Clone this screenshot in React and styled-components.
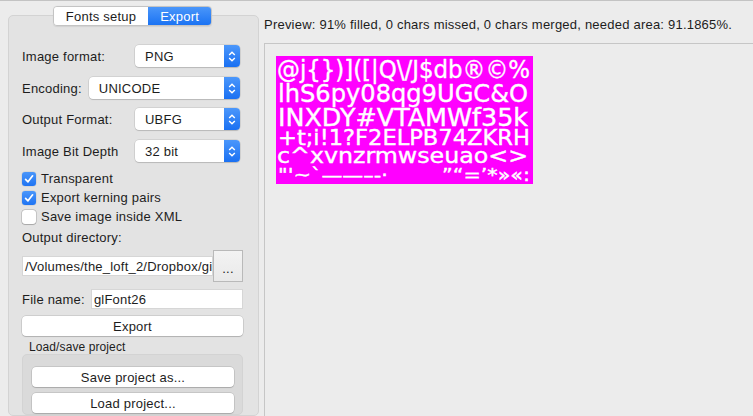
import React from "react";
import styled, { createGlobalStyle } from "styled-components";

const GlobalStyle = createGlobalStyle`
  html, body { margin: 0; padding: 0; background: #ececec; }
  body {
    font-family: "Liberation Sans", Arial, sans-serif;
    font-size: 13px;
    letter-spacing: 0.22px;
    color: #1d1d1d;
  }
  * { box-sizing: border-box; }
`;

const Window = styled.div`
  width: 753px;
  height: 416px;
  border-top: 1px solid #c3c3c3;
  background: #ececec;
  display: flex;
  overflow: hidden;
`;

const Sidebar = styled.div`
  width: 259px;
  flex: none;
  padding: 5px 0 0 8px;
  display: flex;
  flex-direction: column;
`;

const TabBar = styled.div`
  align-self: center;
  display: flex;
  height: 20px;
  border: 1px solid #c4c4c4;
  border-radius: 4px;
  overflow: hidden;
  position: relative;
  z-index: 1;
  margin-left: -2px;
  box-shadow: 0 0.5px 1px rgba(0, 0, 0, 0.08);
`;

const Tab = styled.div`
  height: 100%;
  padding: 0 ${(p) => p.$pad}px;
  display: flex;
  align-items: center;
  font-size: 13px;
  background: ${(p) => (p.$active ? "linear-gradient(#4a96fa, #1b73f3)" : "#fff")};
  color: ${(p) => (p.$active ? "#fff" : "#1d1d1d")};
`;

const Pane = styled.div`
  flex: 1;
  margin-top: -11px;
  background: #e3e3e3;
  border: 1px solid #d3d3d3;
  border-radius: 5px;
  padding: 29px 15px 0 13px;
  display: flex;
  flex-direction: column;
`;

const Row = styled.div`
  display: flex;
  align-items: center;
  height: ${(p) => p.$h}px;
  margin-top: ${(p) => p.$mt || 0}px;
  flex: none;
`;

const Label = styled.span`
  flex: none;
  width: ${(p) => (p.$w ? `${p.$w}px` : "auto")};
  margin-right: ${(p) => p.$gap || 0}px;
  white-space: nowrap;
`;

const SelectBox = styled.div`
  flex: 1;
  height: 22px;
  margin-right: 3px;
  display: flex;
  background: #fff;
  border-radius: 4px;
  box-shadow: 0 0 0 0.5px rgba(0, 0, 0, 0.15), 0 1px 1px rgba(0, 0, 0, 0.12);
  overflow: hidden;
`;

const SelectText = styled.span`
  flex: 1;
  padding-left: 10px;
  display: flex;
  align-items: center;
`;

const SelectArrow = styled.span`
  width: 16px;
  flex: none;
  background: linear-gradient(#4b97fb, #1a70f2);
  display: flex;
  align-items: center;
  justify-content: center;
`;

const CheckRow = styled.div`
  display: flex;
  align-items: center;
  height: 19px;
  flex: none;
`;

const Box = styled.span`
  width: 14px;
  height: 14px;
  margin-right: 5px;
  border-radius: 3px;
  flex: none;
  display: flex;
  align-items: center;
  justify-content: center;
  background: ${(p) => (p.$checked ? "linear-gradient(#4a96fa, #1f74f3)" : "#fff")};
  box-shadow: ${(p) =>
    p.$checked
      ? "0 0 0 0.5px rgba(0,0,0,0.1)"
      : "0 0 0 0.5px rgba(0,0,0,0.25), 0 0.5px 1px rgba(0,0,0,0.15)"};
`;

const LineEdit = styled.div`
  flex: 1;
  min-width: 0;
  height: 20px;
  background: #fff;
  border: 1px solid #d6d6d6;
  padding-left: 2px;
  display: flex;
  align-items: center;
  white-space: nowrap;
  overflow: hidden;
`;

const BrowseButton = styled.div`
  width: 30px;
  height: 32px;
  flex: none;
  border: 1px solid #b9b9b9;
  background: linear-gradient(#f3f3f3, #e9e9e9);
  display: flex;
  align-items: center;
  justify-content: center;
  padding-top: 4px;
  font-size: 13px;
`;

const PushButton = styled.div`
  height: 20px;
  flex: none;
  margin-top: ${(p) => p.$mt || 0}px;
  background: #fff;
  border-radius: 4px;
  box-shadow: 0 0 0 0.5px rgba(0, 0, 0, 0.18), 0 1px 1px rgba(0, 0, 0, 0.14);
  display: flex;
  align-items: center;
  justify-content: center;
  font-size: 13px;
`;

const GroupTitle = styled.div`
  height: 14px;
  margin-top: 4px;
  padding-left: 7px;
  font-size: 12px;
  letter-spacing: 0.1px;
  line-height: 14px;
  flex: none;
`;

const Group = styled.div`
  flex: 1;
  background: #dadada;
  border: 1px solid #d3d3d3;
  border-radius: 5px;
  padding: 12px 8px 0 9px;
  display: flex;
  flex-direction: column;
`;

const Main = styled.div`
  flex: 1;
  margin-left: 5px;
  display: flex;
  flex-direction: column;
`;

const Status = styled.div`
  height: 42px;
  padding-top: 16px;
  line-height: 16px;
  font-size: 13px;
  white-space: nowrap;
  flex: none;
`;

const Frame = styled.div`
  flex: 1;
  border-top: 1px solid #c6c6c6;
  border-left: 1px solid #c6c6c6;
  padding: 12px 0 0 11px;
`;

const Arrows = () => (
  <svg width="8" height="13" viewBox="0 0 8 13">
    <path d="M1.2 5 L4 2.2 L6.8 5 M1.2 8 L4 10.8 L6.8 8" fill="none" stroke="#fff" strokeWidth="1.4" />
  </svg>
);

const Check = () => (
  <svg width="10" height="10" viewBox="0 0 10 10">
    <path d="M1.6 5.4 L4 7.8 L8.6 1.8" fill="none" stroke="#fff" strokeWidth="1.7" strokeLinecap="round" strokeLinejoin="round" />
  </svg>
);

const Select = ({ value }) => (
  <SelectBox>
    <SelectText>{value}</SelectText>
    <SelectArrow>
      <Arrows />
    </SelectArrow>
  </SelectBox>
);

const CheckItem = ({ checked, children }) => (
  <CheckRow>
    <Box $checked={checked}>{checked && <Check />}</Box>
    {children}
  </CheckRow>
);

const glyphRows = [
  { t: "@j{})]([|Q\\/J$db®©%", y: 22, x: 1, w: 253, s: 25 },
  { t: "lhS6py08qg9UGC&O", y: 46, x: 2, w: 250, s: 25 },
  { t: "INXDY#VTAMWf35k", y: 70, x: 2, w: 250, s: 25 },
  { t: "+t;i!1?F2ELPB74ZKRH", y: 89, x: 2, w: 252, s: 21 },
  { t: "c^xvnzrmwseuao<>", y: 107, x: 1, w: 251, s: 22 },
  { t: "\"'~`——–-·", y: 125, x: 2, w: 110, s: 18 },
  { t: "”“=’*»«:", y: 125, x: 166, w: 88, s: 18 },
];

const FontImage = () => (
  <svg width="257" height="128" viewBox="0 0 257 128">
    <rect width="257" height="128" fill="#ff00ff" />
    {glyphRows.map((r, i) => (
      <text
        key={i}
        x={r.x}
        y={r.y}
        fontSize={r.s}
        fill="#fff"
        stroke="#fff"
        strokeWidth="0.4"
        fontFamily="DejaVu Sans, sans-serif"
        letterSpacing="0"
        textLength={r.w}
        lengthAdjust="spacingAndGlyphs"
      >
        {r.t}
      </text>
    ))}
  </svg>
);

export default function App() {
  return (
    <>
      <GlobalStyle />
      <Window>
        <Sidebar>
          <TabBar>
            <Tab $pad={12}>Fonts setup</Tab>
            <Tab $pad={12} $active>
              Export
            </Tab>
          </TabBar>
          <Pane>
            <Row $h={22}>
              <Label $w={113}>Image format:</Label>
              <Select value="PNG" />
            </Row>
            <Row $h={22} $mt={10}>
              <Label $gap={7}>Encoding:</Label>
              <Select value="UNICODE" />
            </Row>
            <Row $h={22} $mt={9}>
              <Label $w={113}>Output Format:</Label>
              <Select value="UBFG" />
            </Row>
            <Row $h={22} $mt={10}>
              <Label $w={113}>Image Bit Depth</Label>
              <Select value="32 bit" />
            </Row>
            <Row $h={7} />
            <CheckItem checked>Transparent</CheckItem>
            <CheckItem checked>Export kerning pairs</CheckItem>
            <CheckItem>Save image inside XML</CheckItem>
            <Row $h={18} $mt={2}>
              <Label>Output directory:</Label>
            </Row>
            <Row $h={32} $mt={4}>
              <LineEdit>/Volumes/the_loft_2/Dropbox/gi</LineEdit>
              <BrowseButton>...</BrowseButton>
            </Row>
            <Row $h={20} $mt={7}>
              <Label $gap={6}>File name:</Label>
              <LineEdit>glFont26</LineEdit>
            </Row>
            <PushButton $mt={7}>Export</PushButton>
            <GroupTitle>Load/save project</GroupTitle>
            <Group>
              <PushButton>Save project as...</PushButton>
              <PushButton $mt={6}>Load project...</PushButton>
            </Group>
          </Pane>
        </Sidebar>
        <Main>
          <Status>Preview: 91% filled, 0 chars missed, 0 chars merged, needed area: 91.1865%.</Status>
          <Frame>
            <FontImage />
          </Frame>
        </Main>
      </Window>
    </>
  );
}
